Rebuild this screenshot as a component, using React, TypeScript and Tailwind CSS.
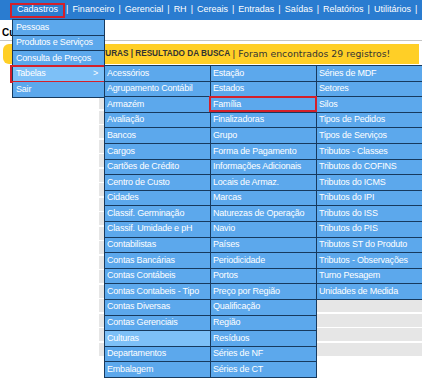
const TOP = ['Financeiro', 'Gerencial', 'RH', 'Cereais', 'Entradas', 'Saídas', 'Relatórios', 'Utilitários'];

const CADASTROS = ['Pessoas', 'Produtos e Serviços', 'Consulta de Preços', 'Tabelas', 'Sair'];

const COLS: string[][] = [
  [
    'Acessórios', 'Agrupamento Contábil', 'Armazém', 'Avaliação', 'Bancos', 'Cargos', 'Cartões de Crédito',
    'Centro de Custo', 'Cidades', 'Classif. Germinação', 'Classif. Umidade e pH', 'Contabilistas',
    'Contas Bancárias', 'Contas Contábeis', 'Contas Contabeis - Tipo', 'Contas Diversas', 'Contas Gerenciais',
    'Culturas', 'Departamentos', 'Embalagem',
  ],
  [
    'Estação', 'Estados', 'Família', 'Finalizadoras', 'Grupo', 'Forma de Pagamento', 'Informações Adicionais',
    'Locais de Armaz.', 'Marcas', 'Naturezas de Operação', 'Navio', 'Países', 'Periodicidade', 'Portos',
    'Preço por Região', 'Qualificação', 'Região', 'Resíduos', 'Séries de NF', 'Séries de CT',
  ],
  [
    'Séries de MDF', 'Setores', 'Silos', 'Tipos de Pedidos', 'Tipos de Serviços', 'Tributos - Classes',
    'Tributos do COFINS', 'Tributos do ICMS', 'Tributos do IPI', 'Tributos do ISS', 'Tributos do PIS',
    'Tributos ST do Produto', 'Tributos - Observações', 'Turno Pesagem', 'Unidades de Medida',
  ],
];

const COL_W = ['w-[107px] border-l', 'w-[106px]', 'w-[110px]'];

function Cell({ label, hover, marked }: { label: string; hover?: boolean; marked?: boolean }) {
  return (
    <div
      className={`relative flex h-[15.6px] items-center border-b border-r border-[#173a5e] pl-[2px] text-[9px] tracking-[-0.2px] text-white whitespace-nowrap ${
        hover ? 'bg-[#7dc0f7]' : 'bg-[#5ca8ec]'
      }`}
    >
      {label}
      {marked && <div className="absolute -left-[2px] -right-[1px] -top-[1px] bottom-0 border-2 border-[#d4202a]" />}
    </div>
  );
}

export default function App() {
  return (
    <div className="relative h-[391px] w-[422px] overflow-hidden bg-white font-['Liberation_Sans',Arial,sans-serif]">
      {/* top menu bar */}
      <div className="flex h-[20px] items-center bg-[#2a7cd0] pl-[10px] text-[9px] text-white whitespace-nowrap">
        <span className="flex h-[15px] items-center border-2 border-[#d4202a] px-[5px]">Cadastros</span>
        <span className="ml-[1px] mr-[4px]">|</span>
        {TOP.map((t) => (
          <span key={t} className="flex items-center">
            <span>{t}</span>
            <span className="mx-[4px]">|</span>
          </span>
        ))}
      </div>

      {/* page content underneath */}
      <div className="h-[21px] border-b border-[#c4c4c4] pl-[2px] pt-[7px] text-[10px] font-bold leading-[12px] text-black">
        Culturas
      </div>
      <div className="mx-[3px] mt-[3px] flex h-[20px] items-center rounded-l-[6px] bg-[#ffcf26] pl-[81px] whitespace-nowrap text-[#333]">
        <span className="text-[8.2px] font-bold">CULTURAS | RESULTADO DA BUSCA</span>
        <span className="ml-[2px] font-['DejaVu_Sans',Verdana,sans-serif] text-[9.3px]">| Foram encontrados 29 registros!</span>
      </div>
      <div className="ml-[99px] mt-[3px] flex flex-col gap-[1.5px]">
        {Array.from({ length: 20 }).map((_, i) => (
          <div key={i} className="h-[13px] bg-[#e6e6e6]" />
        ))}
      </div>

      {/* Cadastros dropdown */}
      <div className="absolute left-[12px] top-[19px] w-[93px] border-l border-t border-[#173a5e]">
        {CADASTROS.map((c) => (
          <div
            key={c}
            className={`relative flex h-[15.6px] items-center border-b border-r border-[#173a5e] pl-[3px] pr-[6px] text-[9px] tracking-[-0.2px] text-white whitespace-nowrap ${
              c === 'Tabelas' ? 'bg-[#7dc0f7]' : 'bg-[#5ca8ec]'
            }`}
          >
            <span className="flex-1">{c}</span>
            {c === 'Tabelas' && (
              <>
                <span>&gt;</span>
                <div className="absolute -left-[3px] -right-[2px] -top-[2px] -bottom-[2px] border-2 border-[#d4202a]" />
              </>
            )}
          </div>
        ))}
      </div>

      {/* Tabelas submenu */}
      <div className="absolute left-[104px] top-[65px] flex items-start">
        {COLS.map((col, ci) => (
          <div key={ci} className={`flex flex-col border-t border-[#173a5e] ${COL_W[ci]}`}>
            {col.map((item) => (
              <Cell key={item} label={item} hover={item === 'Culturas'} marked={item === 'Família'} />
            ))}
          </div>
        ))}
      </div>
    </div>
  );
}
